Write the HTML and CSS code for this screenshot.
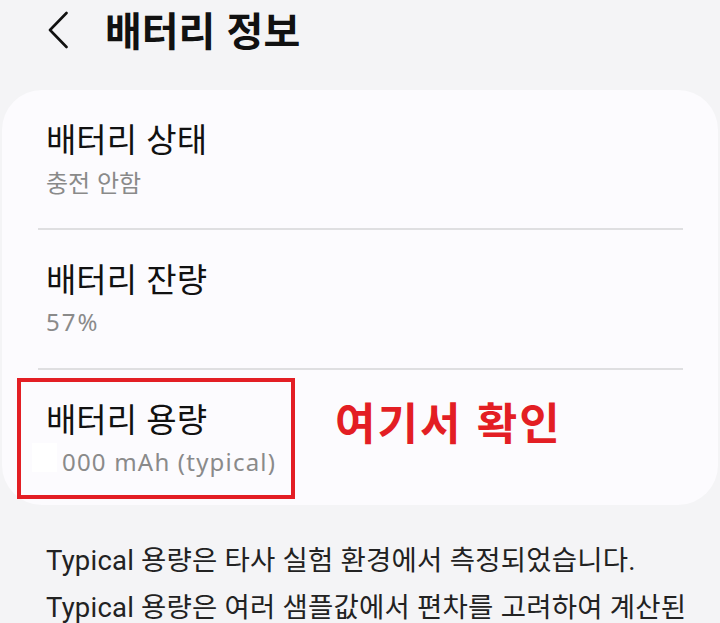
FILE: index.html
```html
<!DOCTYPE html>
<html lang="ko">
<head>
  <meta charset="UTF-8" />
  <meta name="viewport" content="width=device-width, initial-scale=1.0"/>
  <title>배터리 정보</title>
  <link rel="stylesheet" href="styles.css">
</head>
<body>
  <header class="topbar">
    <svg class="back" width="20" height="40" viewBox="0 0 20 40">
      <polyline points="18.5,4 2,21 18.5,38" fill="none" stroke="#111" stroke-width="2.6" stroke-linecap="round" stroke-linejoin="round"/>
    </svg>
    <h1>배터리 정보</h1>
  </header>

  <div class="card">
    <div class="item">
      <div class="item-title">배터리 상태</div>
      <div class="item-sub">충전 안함</div>
    </div>
    <div class="divider"></div>
    <div class="item">
      <div class="item-title">배터리 잔량</div>
      <div class="item-sub latin">57%</div>
    </div>
    <div class="divider"></div>
    <div class="item last">
      <div class="item-title">배터리 용량</div>
      <div class="item-sub latin capacity">000 mAh (typical)</div>
      <div class="mask"></div>
      <div class="mark-box"></div>
      <div class="mark-label">여기서 확인</div>
    </div>
  </div>

  <div class="note">
    <p>Typical 용량은 타사 실험 환경에서 측정되었습니다.</p>
    <p>Typical 용량은 여러 샘플값에서 편차를 고려하여 계산된</p>
  </div>
</body>
</html>
```

FILE: styles.css
```css
html, body {
  margin: 0;
  height: 100%;
  overflow: hidden;
}
body {
  font-family: "Noto Sans CJK KR", "Noto Sans", sans-serif;
  background: #f4f4f6;
  color: #111;
}
.topbar {
  display: flex;
  align-items: center;
  height: 50px;
  padding: 4px 0 0 48px;
}
.back {
  margin-right: 37px;
  flex-shrink: 0;
}
.topbar h1 {
  margin: 0;
  font-size: 40px;
  line-height: 50px;
  font-weight: 700;
}
.card {
  margin: 36px 2px 0;
  background: #fcfbfe;
  border-radius: 40px;
}
.item {
  padding: 28px 44px 31px;
}
.item.last {
  position: relative;
  padding-bottom: 28px;
}
.item-title {
  font-size: 33px;
  line-height: 40px;
}
.item-sub {
  margin-top: 9px;
  font-size: 24px;
  line-height: 30px;
  color: #8a8a8a;
}
.latin {
  font-family: "Noto Sans", "Noto Sans CJK KR", sans-serif;
  letter-spacing: 2px;
}
.capacity {
  margin-left: 16px;
  letter-spacing: 1.2px;
}
.divider {
  height: 2px;
  background: #dfdfe1;
  margin: 0 35px 0 36px;
}
.mask {
  position: absolute;
  left: 30px;
  top: 73px;
  width: 25px;
  height: 29px;
  background: #fff;
}
.mark-box {
  position: absolute;
  left: 15px;
  top: 8px;
  width: 278px;
  height: 121px;
  box-sizing: border-box;
  border: 4px solid #e31e24;
}
.mark-label {
  position: absolute;
  left: 333px;
  top: 26px;
  font-size: 44px;
  line-height: 50px;
  font-weight: 700;
  letter-spacing: 2px;
  color: #e31e24;
}
.note {
  padding: 32px 46px 0;
  font-family: Roboto, "Noto Sans CJK KR", sans-serif;
  font-size: 27.5px;
  line-height: 47px;
  letter-spacing: 0.2px;
  color: #222;
}
.note p {
  margin: 0;
  white-space: nowrap;
}
```
